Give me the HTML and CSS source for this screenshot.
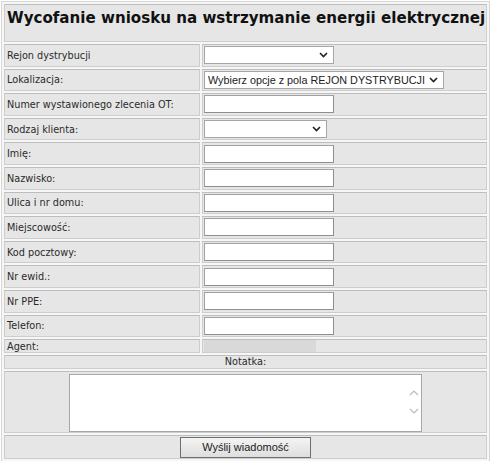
FILE: index.html
```html
<!DOCTYPE html>
<html lang="pl">
<head>
<meta charset="utf-8">
<title>Wycofanie wniosku</title>
<link rel="stylesheet" href="styles.css">
</head>
<body>
<form class="form">
<table class="grid">
  <colgroup><col class="col-label"><col class="col-field"></colgroup>
  <tr class="title-row"><td colspan="2" class="title-cell"><h1 class="title">Wycofanie wniosku na wstrzymanie energii elektrycznej</h1></td></tr>
  <tr class="row"><td class="label">Rejon dystrybucji</td><td class="field"><select class="sel sel-rejon"><option></option></select></td></tr>
  <tr class="row"><td class="label">Lokalizacja:</td><td class="field"><select class="sel sel-lok"><option>Wybierz opcje z pola REJON DYSTRYBUCJI</option></select></td></tr>
  <tr class="row"><td class="label">Numer wystawionego zlecenia OT:</td><td class="field"><input class="inp" type="text"></td></tr>
  <tr class="row"><td class="label">Rodzaj klienta:</td><td class="field"><select class="sel sel-rodzaj"><option></option></select></td></tr>
  <tr class="row"><td class="label">Imię:</td><td class="field"><input class="inp" type="text"></td></tr>
  <tr class="row"><td class="label">Nazwisko:</td><td class="field"><input class="inp" type="text"></td></tr>
  <tr class="row"><td class="label">Ulica i nr domu:</td><td class="field"><input class="inp" type="text"></td></tr>
  <tr class="row"><td class="label">Miejscowość:</td><td class="field"><input class="inp" type="text"></td></tr>
  <tr class="row"><td class="label">Kod pocztowy:</td><td class="field"><input class="inp" type="text"></td></tr>
  <tr class="row"><td class="label">Nr ewid.:</td><td class="field"><input class="inp" type="text"></td></tr>
  <tr class="row"><td class="label">Nr PPE:</td><td class="field"><input class="inp" type="text"></td></tr>
  <tr class="row"><td class="label">Telefon:</td><td class="field"><input class="inp" type="text"></td></tr>
  <tr class="agent-row"><td class="label label-top">Agent:</td><td class="field field-top"><input class="agent" type="text" readonly></td></tr>
  <tr class="note-row"><td colspan="2" class="note-label">Notatka:</td></tr>
  <tr class="area-row"><td colspan="2" class="center"><div class="area-wrap"><textarea class="area"></textarea><svg class="area-arrows" width="10" height="26" viewBox="0 0 10 26"><path d="M1 6 L5 2 L9 6" fill="none" stroke="#bcbcbc" stroke-width="1.2"/><path d="M1 20 L5 24 L9 20" fill="none" stroke="#bcbcbc" stroke-width="1.2"/></svg></div></td></tr>
  <tr class="btn-row"><td colspan="2" class="center"><button type="button" class="btn">Wyślij wiadomość</button></td></tr>
</table>
</form>
</body>
</html>
```

FILE: styles.css
```css
html, body {
  margin: 0;
  padding: 0;
  background: #ffffff;
}
.form {
  margin: 0;
  padding: 1px 0 0 1px;
}
.grid {
  width: 489px;
  table-layout: fixed;
  border: 1px solid #d6d6d6;
  border-spacing: 2px;
  border-collapse: separate;
  background: #f6f6f6;
  font-family: "DejaVu Sans", Verdana, sans-serif;
  font-size: 9.7px;
  color: #2a2a2a;
}
.col-label { width: 196px; }
.grid td {
  background: #e6e6e6;
  border: 1px solid #cdcdcd;
  border-top-color: #bdbdbd;
  padding: 0 0 0 2px;
  vertical-align: middle;
  overflow: hidden;
}
.title-row { height: 38px; }
.grid td.title-cell { vertical-align: top; }
.title {
  margin: 4px 0 0 0;
  font-family: "DejaVu Sans", Verdana, sans-serif;
  font-weight: bold;
  font-size: 15.1px;
  line-height: 18px;
  color: #111;
  white-space: nowrap;
}
.row { height: 22.6px; }
.label { white-space: nowrap; }
.grid td.field { padding-left: 1px; }
.sel {
  -webkit-appearance: none;
  appearance: none;
  box-sizing: border-box;
  height: 18px;
  margin: 0;
  padding: 0 16px 0 3px;
  border: 1px solid #a6a6a6;
  border-radius: 0;
  background-color: #fff;
  background-image: url("data:image/svg+xml;utf8,<svg xmlns='http://www.w3.org/2000/svg' width='9' height='6' viewBox='0 0 9 6'><path d='M1 1 L4.5 4.5 L8 1' fill='none' stroke='%23222' stroke-width='1.6'/></svg>");
  background-repeat: no-repeat;
  background-position: right 5px center;
  font-family: "Liberation Sans", Arial, sans-serif;
  font-size: 10.8px;
  color: #222;
  display: block;
}
.sel-rejon { width: 130px; }
.sel-lok { width: 240px; }
.sel-rodzaj { width: 123px; }
.inp {
  box-sizing: border-box;
  display: block;
  width: 130px;
  height: 18px;
  margin: 0;
  padding: 0 2px;
  border: 1px solid #a0a0a0;
  border-bottom-color: #8e8e8e;
  border-right-color: #8e8e8e;
  background: #fff;
}
.agent-row { height: 13px; }
.grid td.label-top { vertical-align: middle; line-height: 11px; }
.grid td.field-top { padding-left: 1px; vertical-align: bottom; }
.agent {
  box-sizing: border-box;
  display: block;
  width: 112px;
  height: 12px;
  margin: 0;
  padding: 0;
  border: none;
  background: #d9d9d9;
}
.note-row { height: 14px; }
.grid td.note-label {
  text-align: center;
  line-height: 12px;
  padding: 0;
}
.area-row { height: 62px; }
.grid td.center { text-align: center; padding: 0; }
.area-wrap {
  position: relative;
  display: inline-block;
  vertical-align: middle;
  margin-top: 2px;
}
.area {
  box-sizing: border-box;
  display: block;
  width: 353px;
  height: 58px;
  margin: 0;
  border: 1px solid #a6a6a6;
  background: #fff;
  resize: none;
  font-family: "Liberation Sans", Arial, sans-serif;
}
.area-arrows {
  position: absolute;
  right: 3px;
  top: 15px;
}
.btn-row { height: 24px; }
.btn {
  box-sizing: border-box;
  width: 131px;
  height: 21px;
  margin: 0;
  padding: 0;
  border: 1px solid #6f6f6f;
  border-radius: 0;
  background: linear-gradient(#f4f4f4, #dedede);
  font-family: "Liberation Sans", Arial, sans-serif;
  font-size: 11px;
  color: #222;
  vertical-align: middle;
}
```
